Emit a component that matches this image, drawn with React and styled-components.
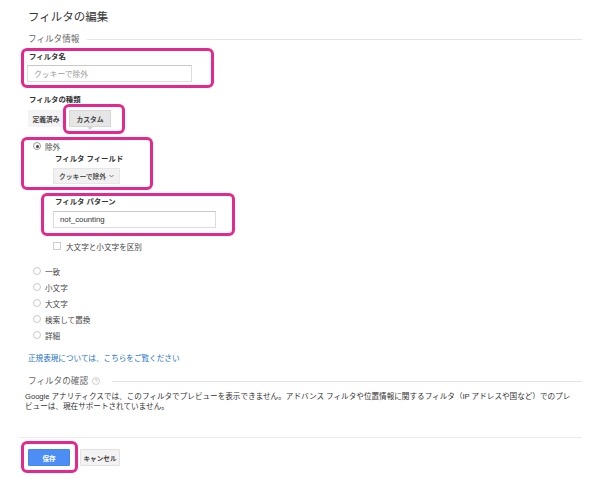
import React from 'react';
import styled, { createGlobalStyle } from 'styled-components';

const GlobalStyle = createGlobalStyle`
  html, body {
    margin: 0;
    padding: 0;
    background: #fff;
  }
  body {
    font-family: "Liberation Sans", "Noto Sans CJK JP", sans-serif;
    color: #333;
  }
`;

const Page = styled.div`
  position: relative;
  width: 600px;
  height: 484px;
  overflow: hidden;
  box-sizing: border-box;
  padding: 10px 18px 0 27px;
`;

const Title = styled.h1`
  margin: 0 0 0 1px;
  font-size: 11.5px;
  line-height: 14px;
  font-weight: 400;
  color: #333;
`;

const SectionHeader = styled.div`
  display: flex;
  align-items: center;
  gap: ${p => p.gap || 8}px;
  margin: ${p => p.top}px 0 0 1px;
  height: 12px;
  font-size: 8.6px;
  line-height: 12px;
  color: #666;
  &::after {
    content: '';
    flex: 1;
    height: 1px;
    background: #e3e3e3;
    margin-top: 1px;
  }
`;

const Label = styled.div`
  margin: ${p => p.top}px 0 0 ${p => p.left || 2}px;
  font-size: 7.4px;
  line-height: 10px;
  font-weight: 700;
  color: #333;
`;

const TextInput = styled.div`
  box-sizing: border-box;
  margin-top: ${p => p.top}px;
  width: ${p => p.w}px;
  height: 17px;
  border: 1px solid #dcdcdc;
  border-top-color: #c8c8c8;
  padding-left: 6px;
  display: flex;
  align-items: center;
  font-size: 7.8px;
  color: ${p => (p.placeholder ? '#999' : '#333')};
`;

const ToggleGroup = styled.div`
  display: flex;
  gap: 5px;
  margin: 5px 0 0 1px;
`;

const Toggle = styled.div`
  position: relative;
  box-sizing: border-box;
  width: ${p => p.w}px;
  height: 17px;
  display: flex;
  align-items: center;
  justify-content: center;
  background: ${p => (p.active ? '#e6e6e6' : '#f3f3f3')};
  border: 1px solid ${p => (p.active ? '#d6d6d6' : '#f3f3f3')};
  font-size: 6.8px;
  font-weight: 700;
  color: #444;
  &::after {
    content: '';
    display: ${p => (p.active ? 'block' : 'none')};
    position: absolute;
    left: 50%;
    bottom: -4px;
    margin-left: -3px;
    border-left: 3px solid transparent;
    border-right: 3px solid transparent;
    border-top: 3px solid #d6d6d6;
  }
`;

const RadioRow = styled.div`
  display: flex;
  align-items: center;
  gap: 4px;
  height: ${p => p.h || 16}px;
  margin: ${p => p.top || 0}px 0 0 6px;
  font-size: 7.6px;
  color: #444;
`;

const RadioDot = styled.span`
  box-sizing: border-box;
  width: 8px;
  height: 8px;
  border-radius: 50%;
  border: 1px solid ${p => (p.checked ? '#9a9a9a' : '#c9c9c9')};
  background: #fff;
  display: flex;
  align-items: center;
  justify-content: center;
  &::after {
    content: '';
    display: ${p => (p.checked ? 'block' : 'none')};
    width: 3px;
    height: 3px;
    border-radius: 50%;
    background: #444;
  }
`;

const Indented = styled.div`
  padding-left: 26px;
`;

const Select = styled.div`
  box-sizing: border-box;
  margin-top: 4px;
  width: 67px;
  height: 16px;
  background: #f1f1f1;
  border: 1px solid #e6e6e6;
  display: flex;
  align-items: center;
  justify-content: space-between;
  padding: 0 5px 0 5px;
  font-size: 6.8px;
  font-weight: 700;
  color: #555;
`;

const CheckRow = styled.div`
  display: flex;
  align-items: center;
  gap: 5px;
  height: 10px;
  margin-top: 13px;
  font-size: 7.6px;
  color: #444;
`;

const CheckBox = styled.span`
  box-sizing: border-box;
  width: 8px;
  height: 8px;
  border: 1px solid #cfcfcf;
  background: #fff;
`;

const RadioList = styled.div`
  margin-top: 12px;
`;

const Link = styled.a`
  display: block;
  margin: 11px 0 0 1px;
  font-size: 7.6px;
  line-height: 10px;
  color: #1a6fc4;
  text-decoration: none;
`;

const HelpIcon = styled.span`
  box-sizing: border-box;
  width: 8px;
  height: 8px;
  border-radius: 50%;
  border: 1px solid #cfcfcf;
  color: #bbb;
  font-size: 5.5px;
  line-height: 6px;
  text-align: center;
  margin-left: -8px;
`;

const Paragraph = styled.p`
  margin: 5px 0 0 -2px;
  font-size: 7.6px;
  line-height: 9.5px;
  color: #333;
`;

const Separator = styled.hr`
  margin: 26px 0 0 -7px;
  border: 0;
  height: 1px;
  background: #ececec;
`;

const ButtonBar = styled.div`
  display: flex;
  gap: 10px;
  margin: 11px 0 0 1px;
`;

const Button = styled.button`
  box-sizing: border-box;
  width: ${p => p.w}px;
  height: 17px;
  padding: 0;
  font-family: inherit;
  font-size: 6.6px;
  font-weight: 700;
  border: 1px solid ${p => (p.primary ? '#4787ed' : '#e2e2e2')};
  background: ${p => (p.primary ? '#4d8ef5' : '#f3f3f3')};
  color: ${p => (p.primary ? '#fff' : '#444')};
  border-radius: 1px;
`;

const Highlight = styled.div`
  position: absolute;
  box-sizing: border-box;
  left: ${p => p.x}px;
  top: ${p => p.y}px;
  width: ${p => p.w}px;
  height: ${p => p.h}px;
  border: 3px solid #e2298d;
  border-radius: 6px;
  pointer-events: none;
`;

const Chevron = () => (
  <svg width="5" height="4" viewBox="0 0 5 4">
    <path d="M0.5 1 L2.5 3 L4.5 1" fill="none" stroke="#777" strokeWidth="1" />
  </svg>
);

const otherRadios = ['一致', '小文字', '大文字', '検索して置換', '詳細'];

const highlights = [
  { x: 21, y: 48, w: 193, h: 40 },
  { x: 63, y: 104, w: 62, h: 30 },
  { x: 21, y: 137, w: 132, h: 53 },
  { x: 41, y: 193, w: 194, h: 43 },
  { x: 21, y: 441, w: 57, h: 32 },
];

export default function App() {
  return (
    <>
      <GlobalStyle />
      <Page>
        <Title>フィルタの編集</Title>
        <SectionHeader top={9}>フィルタ情報</SectionHeader>

        <Label top={7}>フィルタ名</Label>
        <TextInput top={3} w={165} placeholder>クッキーで除外</TextInput>

        <Label top={13}>フィルタの種類</Label>
        <ToggleGroup>
          <Toggle w={36}>定義済み</Toggle>
          <Toggle w={42} active>カスタム</Toggle>
        </ToggleGroup>

        <RadioRow top={14} h={10}>
          <RadioDot checked />
          除外
        </RadioRow>
        <Indented>
          <Label top={3} left={2}>フィルタ フィールド</Label>
          <Select>
            クッキーで除外
            <Chevron />
          </Select>
          <Label top={13} left={2}>フィルタ パターン</Label>
          <TextInput top={4} w={163}>not_counting</TextInput>
          <CheckRow>
            <CheckBox />
            大文字と小文字を区別
          </CheckRow>
        </Indented>

        <RadioList>
          {otherRadios.map(r => (
            <RadioRow key={r}>
              <RadioDot />
              {r}
            </RadioRow>
          ))}
        </RadioList>

        <Link href="#">正規表現については、こちらをご覧ください</Link>

        <SectionHeader top={11} gap={12}>
          フィルタの確認
          <HelpIcon>?</HelpIcon>
        </SectionHeader>
        <Paragraph>
          Google アナリティクスでは、このフィルタでプレビューを表示できません。アドバンス フィルタや位置情報に関するフィルタ（IP アドレスや国など）でのプレ
          <br />
          ビューは、現在サポートされていません。
        </Paragraph>

        <Separator />

        <ButtonBar>
          <Button primary w={42}>保存</Button>
          <Button w={40}>キャンセル</Button>
        </ButtonBar>

        {highlights.map((h, i) => (
          <Highlight key={i} {...h} />
        ))}
      </Page>
    </>
  );
}
